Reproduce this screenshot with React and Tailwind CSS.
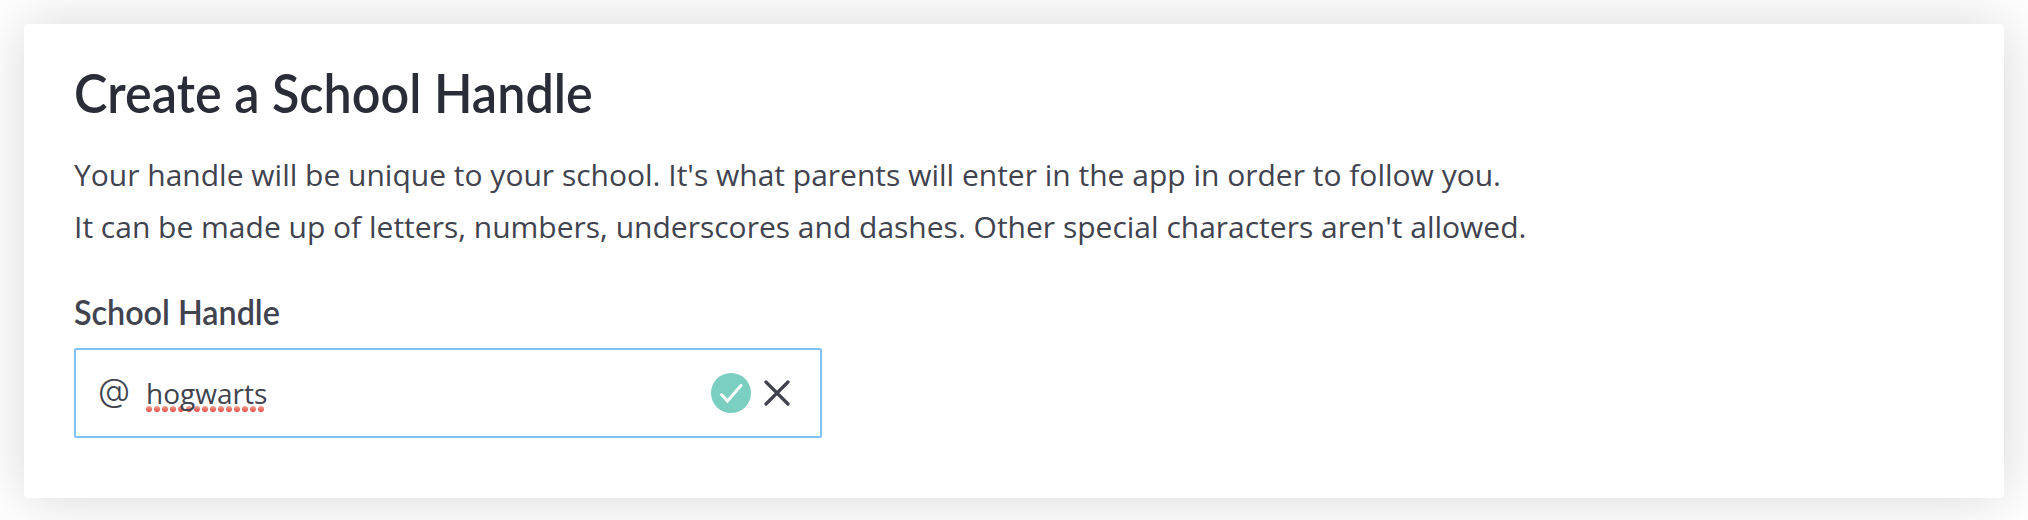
import React from 'react';

const CheckBadge = () => {
    return (
        <svg className="w-10 h-10" viewBox="0 0 40 40" fill="none">
            <circle cx="20" cy="20" r="20" fill="#7acfc0" />
            <path d="M10.5 21.5L16.5 28L30 12.5" stroke="#fff" strokeWidth="3" strokeLinecap="round" strokeLinejoin="miter" />
        </svg>
    );
};

const CloseIcon = () => {
    return (
        <svg className="w-[26px] h-[26px]" viewBox="0 0 26 26" fill="none">
            <path d="M2 2L24 24M24 2L2 24" stroke="#41434f" strokeWidth="3.2" strokeLinecap="round" />
        </svg>
    );
};

// red dotted underline below a misspelled word
const SpellingDots = () => {
    return (
        <svg className="absolute left-0 top-[37px] w-[118px] h-[6px]" viewBox="0 0 118 6">
            <defs>
                <linearGradient id="dot" x1="0" y1="0" x2="0" y2="1">
                    <stop offset="0" stopColor="#f0a096" />
                    <stop offset="1" stopColor="#e8483e" />
                </linearGradient>
            </defs>
            {Array.from({ length: 15 }, (_, i) => (
                <circle key={i} cx={3 + i * 8} cy="3" r="3" fill="url(#dot)" />
            ))}
        </svg>
    );
};

const HandleInput = () => {
    return (
        <div className="flex items-center w-[748px] h-[90px] border-2 border-[#80c2f7] rounded-[2px] pl-[22px] pr-[30px]">
            <span className="w-[48px] pb-[6px] font-[Inter,sans-serif] font-light text-[33px] leading-[48px]">@</span>
            <span className="relative font-['Open_Sans',sans-serif] text-[28px] leading-[48px]">
                <SpellingDots />
                <span className="relative">hogwarts</span>
            </span>
            <div className="ml-auto flex items-center gap-[13px]">
                <CheckBadge />
                <CloseIcon />
            </div>
        </div>
    );
};

const App = () => {
    return (
        <div className="h-[520px] overflow-hidden bg-white p-6 text-[#41434f]">
            <div className="h-[474px] rounded bg-white px-[50px] pt-[37px] shadow-[0_0_60px_rgba(0,0,0,0.16)]">
                <h1 className="w-fit origin-left scale-x-[0.932] whitespace-nowrap font-[Lato,sans-serif] font-semibold text-[54px] leading-[64px] text-[#2a2c37]">
                    Create a School Handle
                </h1>
                <p className="mt-[24px] whitespace-nowrap font-['Open_Sans',sans-serif] text-[30px] leading-[52px]">
                    Your handle will be unique to your school. It's what parents will enter in the app in order to follow you.
                    <br />
                    It can be made up of letters, numbers, underscores and dashes. Other special characters aren't allowed.
                </p>
                <label className="mt-[37px] mb-[14px] block w-fit origin-left scale-x-[0.95] whitespace-nowrap font-[Lato,sans-serif] font-semibold text-[34px] leading-[44px]">
                    School Handle
                </label>
                <HandleInput />
            </div>
        </div>
    );
};

export default App;
